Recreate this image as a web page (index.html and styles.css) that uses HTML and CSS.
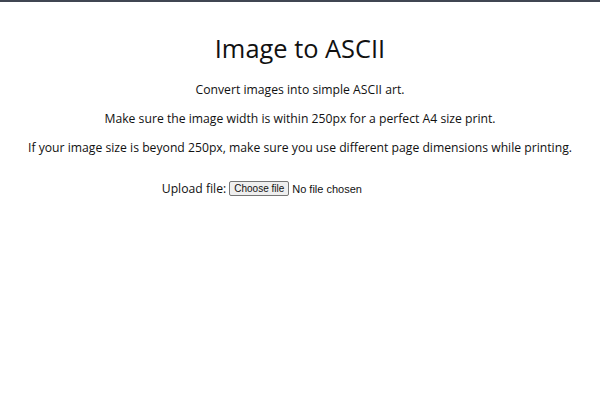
FILE: index.html
```html
<!DOCTYPE html>
<html>
<head>
<meta charset="utf-8">
<link rel="stylesheet" href="styles.css">
</head>
<body>
<div class="topbar"></div>
<main class="page">
  <h1 class="title">Image to ASCII</h1>
  <p class="text">Convert images into simple ASCII art.</p>
  <p class="text">Make sure the image width is within 250px for a perfect A4 size print.</p>
  <p class="text">If your image size is beyond 250px, make sure you use different page dimensions while printing.</p>
  <div class="upload">
    <span class="label">Upload file:</span>
    <label class="file">
      <input class="file-input" type="file">
      <span class="file-btn">Choose file</span>
      <span class="file-name">No file chosen</span>
    </label>
  </div>
</main>
</body>
</html>
```
FILE: styles.css
```css
html, body {
  margin: 0;
  padding: 0;
  background: #ffffff;
}
body {
  font-family: "Open Sans", "Liberation Sans", sans-serif;
  color: #111111;
}
.topbar {
  height: 2px;
  background: #404652;
}
.page {
  display: flex;
  flex-direction: column;
  align-items: center;
  text-align: center;
}
.title {
  font-size: 25.4px;
  font-weight: 400;
  margin: 29px 0 16px;
}
.text {
  font-size: 12.2px;
  margin: 0 0 12px;
  line-height: 17px;
}
.upload {
  margin-top: 12px;
  display: flex;
  align-items: center;
  gap: 3px;
  font-size: 12.2px;
}
.file {
  width: 209px;
  display: flex;
  align-items: center;
  gap: 3px;
  font-family: "Liberation Sans", Arial, sans-serif;
  font-size: 11px;
  color: #111;
  text-align: left;
}
.file-input {
  display: none;
}
.file-btn {
  display: inline-block;
  height: 13px;
  line-height: 13px;
  padding: 0 4px;
  font-size: 10px;
  background: #efefef;
  border: 1px solid #767676;
  border-radius: 2px;
}
```
